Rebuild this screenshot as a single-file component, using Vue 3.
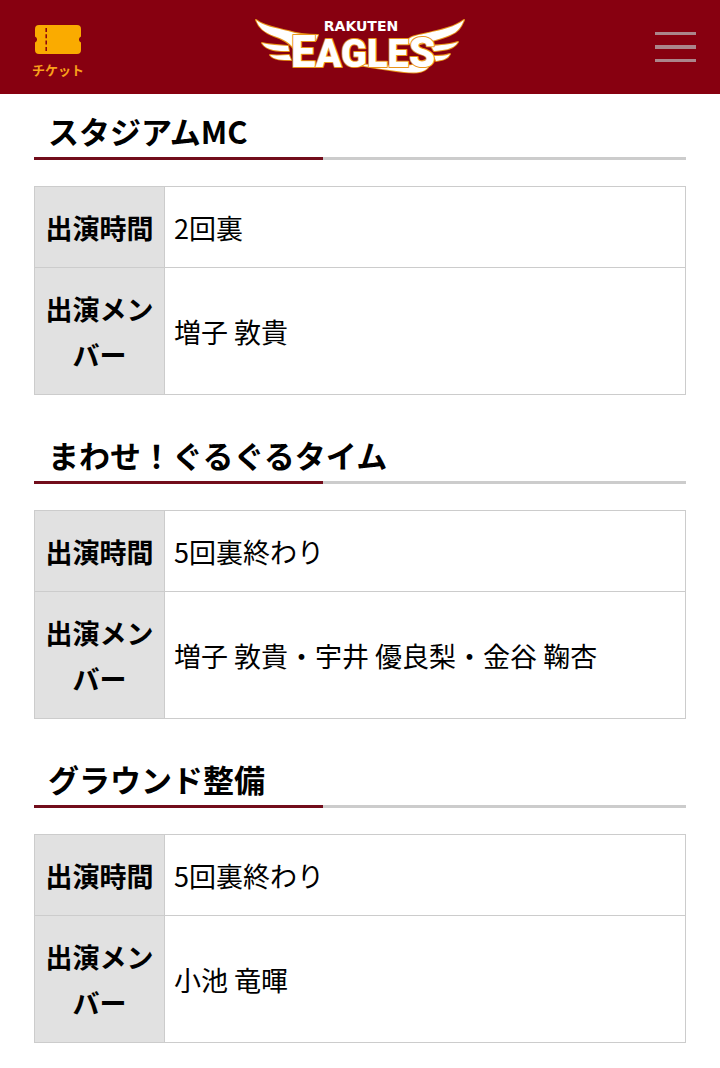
<script setup>
import { ref } from "vue";

const menuOpen = ref(false);

const toggleMenu = () => {
  menuOpen.value = !menuOpen.value;
};

const events = ref([
  { id: 1, title: "スタジアムMC", time: "2回裏", members: "増子 敦貴" },
  {
    id: 2,
    title: "まわせ！ぐるぐるタイム",
    time: "5回裏終わり",
    members: "増子 敦貴・宇井 優良梨・金谷 鞠杏",
  },
  { id: 3, title: "グラウンド整備", time: "5回裏終わり", members: "小池 竜暉" },
]);
</script>

<template>
  <div class="page">
    <header class="header">
      <a href="#" class="ticket">
        <svg class="ticket-icon" viewBox="0 0 46 29" aria-hidden="true">
          <path
            d="M4 0H42Q46 0 46 4V11.5A3.2 3.2 0 0 0 46 17.5V25Q46 29 42 29H4Q0 29 0 25V17.5A3.2 3.2 0 0 0 0 11.5V4Q0 0 4 0Z"
            fill="#faab00"
          />
          <path d="M11.2 3V27" stroke="#870010" stroke-width="1.5" stroke-dasharray="4 2.3" />
        </svg>
        <span>チケット</span>
      </a>

      <a href="#" class="logo">
        <svg viewBox="254 7 212 80" role="img" aria-label="RAKUTEN EAGLES">
          <text class="logo-small" x="361" y="31" text-anchor="middle">RAKUTEN</text>
          <g class="logo-shape">
            <!-- left wing -->
            <path d="M256 20C263 26 276 28 288 31C297 34 307 35 318 35L316 40L298 41L295 50C290 43 284 39 274 36C265 33 259 28 256 20Z" />
            <path d="M262 43C270 45 279 45 288 46L289 51C278 51 267 51 262 43Z" />
            <path d="M270 55C277 56 283 55 289 55L291 60C282 60 274 60 270 55Z" />
            <!-- right wing -->
            <path d="M464 20C455 27 441 30 428 33C419 35 410 36 407 41L412 46L424 43C435 40 444 38 450 35C458 32 461 27 464 20Z" />
            <path d="M431 46C440 45 450 45 458 42C453 50 443 50 434 51Z" />
            <path d="M434 56C440 56 445 56 450 54C447 60 441 60 436 61Z" />
            <!-- tail of the last letter -->
            <path d="M352 64C374 65 396 67 412 65L426 60L431 62C427 74 416 73 404 72C386 70 370 67 352 64Z" />
          </g>
          <text class="logo-big" x="291" y="67">
            <tspan font-size="44">E</tspan><tspan font-size="38">AGLE</tspan><tspan font-size="42">S</tspan>
          </text>
        </svg>
      </a>

      <button
        type="button"
        class="menu"
        aria-label="メニュー"
        :aria-expanded="menuOpen"
        @click="toggleMenu"
      >
        <span></span>
        <span class="middle"></span>
        <span></span>
      </button>
    </header>

    <main class="content">
      <section v-for="event in events" :key="event.id" class="event">
        <h2>{{ event.title }}</h2>
        <table>
          <tbody>
            <tr>
              <th scope="row">出演時間</th>
              <td>{{ event.time }}</td>
            </tr>
            <tr>
              <th scope="row">出演メンバー</th>
              <td>{{ event.members }}</td>
            </tr>
          </tbody>
        </table>
      </section>
    </main>
  </div>
</template>

<style>
body {
  margin: 0;
  background: #fff;
}
</style>

<style scoped>
.page {
  color: #000;
  font-family: "Noto Sans CJK JP", sans-serif;
}

.header {
  display: grid;
  grid-template-columns: 1fr auto 1fr;
  align-items: center;
  box-sizing: border-box;
  height: 94px;
  padding: 0 24px;
  background: #870010;
}

.ticket {
  display: flex;
  flex-direction: column;
  align-items: center;
  justify-self: start;
  gap: 6px;
  margin-left: 8px;
  padding-top: 10px;
  color: #f9a11b;
  font-size: 13px;
  font-weight: bold;
  line-height: 20px;
  text-decoration: none;
}

.ticket-icon {
  width: 46px;
  height: 29px;
}

.logo svg {
  display: block;
  width: 212px;
  height: 80px;
}

.logo-small {
  fill: #fff;
  font-family: "DejaVu Sans", sans-serif;
  font-size: 14px;
  font-weight: bold;
}

.logo-shape,
.logo-big {
  fill: #fff;
  stroke: #e9941a;
  stroke-width: 2px;
  stroke-linejoin: round;
  paint-order: stroke;
}

.logo-big {
  font-family: Roboto, "Liberation Sans", sans-serif;
  font-weight: 900;
}

.menu {
  display: flex;
  flex-direction: column;
  justify-self: end;
  gap: 10px;
  width: 41px;
  padding: 0;
  border: 0;
  background: none;
  cursor: pointer;
}

.menu span {
  height: 3px;
  background: #ab858b;
}

.menu .middle {
  height: 4px;
}

.content {
  padding: 15px 34px 24px;
}

.event + .event {
  margin-top: 38px;
}

h2 {
  margin: 0 0 26px;
  padding: 0 14px 4px;
  border-bottom: 3px solid #ccc;
  border-image: linear-gradient(to right, #720d1b 289px, #ccc 289px) 3;
  font-size: 31px;
  font-weight: bold;
  line-height: 44px;
}

table {
  width: 100%;
  border-collapse: collapse;
  table-layout: fixed;
  font-size: 27px;
  line-height: 46px;
}

th,
td {
  padding: 18px 9px 16px;
  border: 1px solid #ccc;
}

th {
  box-sizing: border-box;
  width: 130px;
  background: #e1e1e1;
  font-weight: bold;
  text-align: center;
}

td {
  text-align: left;
}
</style>
